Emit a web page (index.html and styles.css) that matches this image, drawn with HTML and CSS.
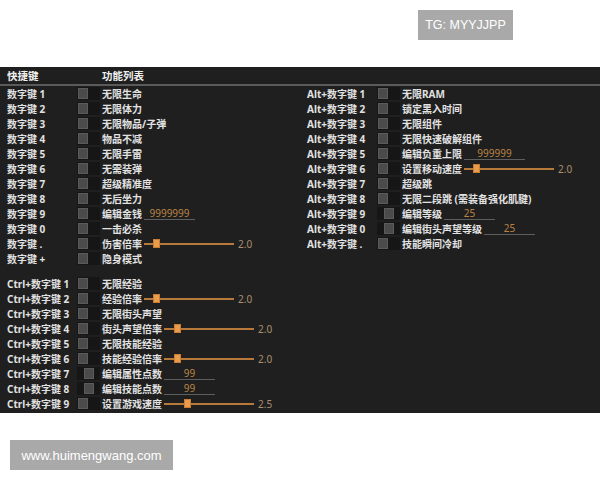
FILE: index.html
```html
<!DOCTYPE html>
<html lang="zh">
<head>
<meta charset="utf-8">
<link rel="stylesheet" href="styles.css">
</head>
<body>
<div class="top"><div class="tg">TG: MYYJJPP</div></div>
<div class="panel">
  <div class="head"><span class="hkey">快捷键</span><span>功能列表</span></div>
  <div class="cols">
    <div class="col">
      <div class="row"><span class="key">数字键 1</span><span class="cb"><i></i></span><span class="lbl">无限生命</span></div>
      <div class="row"><span class="key">数字键 2</span><span class="cb"><i></i></span><span class="lbl">无限体力</span></div>
      <div class="row"><span class="key">数字键 3</span><span class="cb"><i></i></span><span class="lbl">无限物品/子弹</span></div>
      <div class="row"><span class="key">数字键 4</span><span class="cb"><i></i></span><span class="lbl">物品不减</span></div>
      <div class="row"><span class="key">数字键 5</span><span class="cb"><i></i></span><span class="lbl">无限手雷</span></div>
      <div class="row"><span class="key">数字键 6</span><span class="cb"><i></i></span><span class="lbl">无需装弹</span></div>
      <div class="row"><span class="key">数字键 7</span><span class="cb"><i></i></span><span class="lbl">超级精准度</span></div>
      <div class="row"><span class="key">数字键 8</span><span class="cb"><i></i></span><span class="lbl">无后坐力</span></div>
      <div class="row"><span class="key">数字键 9</span><span class="cb"><i></i></span><span class="lbl">编辑金钱</span><span class="inp">9999999</span></div>
      <div class="row"><span class="key">数字键 0</span><span class="cb"><i></i></span><span class="lbl">一击必杀</span></div>
      <div class="row"><span class="key">数字键 .</span><span class="cb"><i></i></span><span class="lbl">伤害倍率</span><span class="slider"><span class="track"><b class="knob" style="left:9px"></b></span><span class="val">2.0</span></span></div>
      <div class="row"><span class="key">数字键 +</span><span class="cb"><i></i></span><span class="lbl">隐身模式</span></div>
      <div class="gap"></div>
      <div class="row"><span class="key">Ctrl+数字键 1</span><span class="cb"><i></i></span><span class="lbl">无限经验</span></div>
      <div class="row"><span class="key">Ctrl+数字键 2</span><span class="cb"><i></i></span><span class="lbl">经验倍率</span><span class="slider"><span class="track"><b class="knob" style="left:9px"></b></span><span class="val">2.0</span></span></div>
      <div class="row"><span class="key">Ctrl+数字键 3</span><span class="cb"><i></i></span><span class="lbl">无限街头声望</span></div>
      <div class="row"><span class="key">Ctrl+数字键 4</span><span class="cb"><i></i></span><span class="lbl">街头声望倍率</span><span class="slider"><span class="track"><b class="knob" style="left:10px"></b></span><span class="val">2.0</span></span></div>
      <div class="row"><span class="key">Ctrl+数字键 5</span><span class="cb"><i></i></span><span class="lbl">无限技能经验</span></div>
      <div class="row"><span class="key">Ctrl+数字键 6</span><span class="cb"><i></i></span><span class="lbl">技能经验倍率</span><span class="slider"><span class="track"><b class="knob" style="left:10px"></b></span><span class="val">2.0</span></span></div>
      <div class="row"><span class="key">Ctrl+数字键 7</span><span class="cb shift"><i></i></span><span class="lbl">编辑属性点数</span><span class="inp">99</span></div>
      <div class="row"><span class="key">Ctrl+数字键 8</span><span class="cb shift"><i></i></span><span class="lbl">编辑技能点数</span><span class="inp">99</span></div>
      <div class="row"><span class="key">Ctrl+数字键 9</span><span class="cb"><i></i></span><span class="lbl">设置游戏速度</span><span class="slider"><span class="track"><b class="knob" style="left:20px"></b></span><span class="val">2.5</span></span></div>
    </div>
    <div class="col">
      <div class="row"><span class="key">Alt+数字键 1</span><span class="cb"><i></i></span><span class="lbl">无限RAM</span></div>
      <div class="row"><span class="key">Alt+数字键 2</span><span class="cb"><i></i></span><span class="lbl">锁定黑入时间</span></div>
      <div class="row"><span class="key">Alt+数字键 3</span><span class="cb"><i></i></span><span class="lbl">无限组件</span></div>
      <div class="row"><span class="key">Alt+数字键 4</span><span class="cb"><i></i></span><span class="lbl">无限快速破解组件</span></div>
      <div class="row"><span class="key">Alt+数字键 5</span><span class="cb"><i></i></span><span class="lbl">编辑负重上限</span><span class="inp wide">999999</span></div>
      <div class="row"><span class="key">Alt+数字键 6</span><span class="cb"><i></i></span><span class="lbl">设置移动速度</span><span class="slider"><span class="track"><b class="knob" style="left:9px"></b></span><span class="val">2.0</span></span></div>
      <div class="row"><span class="key">Alt+数字键 7</span><span class="cb"><i></i></span><span class="lbl">超级跳</span></div>
      <div class="row"><span class="key">Alt+数字键 8</span><span class="cb"><i></i></span><span class="lbl">无限二段跳 (需装备强化肌腱)</span></div>
      <div class="row"><span class="key">Alt+数字键 9</span><span class="cb shift"><i></i></span><span class="lbl">编辑等级</span><span class="inp">25</span></div>
      <div class="row"><span class="key">Alt+数字键 0</span><span class="cb shift"><i></i></span><span class="lbl">编辑街头声望等级</span><span class="inp">25</span></div>
      <div class="row"><span class="key">Alt+数字键 .</span><span class="cb"><i></i></span><span class="lbl">技能瞬间冷却</span></div>
    </div>
  </div>
</div>
<div class="bottom"><div class="site">www.huimengwang.com</div></div>
</body>
</html>
```

FILE: styles.css
```css
html, body {
  margin: 0;
  padding: 0;
  background: #ffffff;
}
body {
  width: 600px;
  height: 480px;
  overflow: hidden;
  font-family: "Noto Sans", "Noto Sans CJK SC", sans-serif;
}
.top {
  height: 67px;
  box-sizing: border-box;
  padding: 10px 87px 0 0;
  display: flex;
  justify-content: flex-end;
  align-items: flex-start;
}
.tg, .site {
  background: #a9a9a9;
  color: #ffffff;
  font-family: "Liberation Sans", Arial, sans-serif;
  height: 30px;
  display: flex;
  align-items: center;
  justify-content: center;
}
.tg {
  width: 95px;
  font-size: 12.5px;
}
.panel {
  height: 346px;
  background: #1f1f1f;
  color: #e2e2e2;
  font-size: 10px;
  font-weight: 700;
}
.head {
  height: 17px;
  box-sizing: border-box;
  padding-left: 7px;
  display: flex;
  align-items: center;
  border-bottom: 2px solid #5a5a5a;
  font-size: 10.5px;
  color: #f0f0f0;
}
.head { height: 19px; }
.hkey {
  width: 95px;
}
.cols {
  display: grid;
  grid-template-columns: 300px 300px;
}
.col {
  padding-left: 7px;
}
.row {
  height: 15px;
  display: flex;
  align-items: center;
  white-space: nowrap;
}
.key {
  width: 70px;
  flex: none;
}
.cb {
  width: 23px;
  height: 13px;
  background: #161616;
  display: flex;
  align-items: center;
  margin-right: 2px;
  flex: none;
}
.cb i {
  display: block;
  width: 8px;
  height: 9px;
  margin-left: 1px;
  background: #4b4b4b;
  border: 1px solid #5b5b5b;
}
.cb.shift {
  box-sizing: border-box;
  padding-left: 6px;
}
.lbl {
  flex: none;
}
.gap {
  height: 10px;
}
.inp {
  width: 51px;
  margin-left: 2px;
  height: 12px;
  line-height: 11px;
  box-sizing: border-box;
  border-bottom: 1px solid #5e5e5e;
  color: #bb8444;
  font-weight: 400;
  text-align: center;
}
.inp.wide {
  width: 61px;
}
.slider {
  display: flex;
  align-items: center;
  margin-left: 2px;
}
.track {
  position: relative;
  width: 90px;
  height: 2px;
  background: #b87a3a;
}
.knob {
  position: absolute;
  top: -4px;
  width: 7px;
  height: 9px;
  background: #e99c4c;
  box-sizing: border-box;
  border: 1px solid #c97d34;
}
.val {
  margin-left: 4px;
  color: #a89070;
  font-weight: 400;
}
.bottom {
  padding: 27px 0 0 10px;
}
.site {
  width: 163px;
  font-size: 13px;
}
```
